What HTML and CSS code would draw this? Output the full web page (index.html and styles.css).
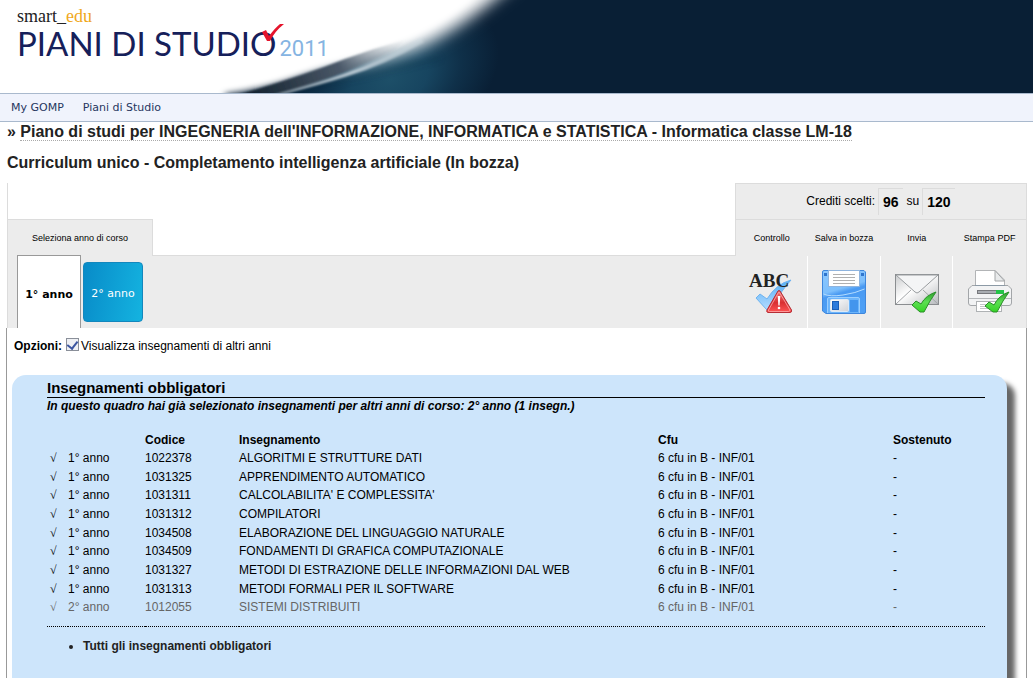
FILE: index.html
```
<!DOCTYPE html>
<html lang="it">
<head>
<meta charset="utf-8">
<title>Piani di Studio</title>
<link rel="stylesheet" href="styles.css">
</head>
<body>
<header class="banner">
  <svg class="swoosh" width="536" height="93" viewBox="0 0 536 93" aria-hidden="true">
    <defs>
      <filter id="wide" x="-10%" y="-30%" width="120%" height="160%"><feGaussianBlur stdDeviation="8"/></filter>
      <filter id="mid" x="-10%" y="-30%" width="120%" height="160%"><feGaussianBlur stdDeviation="3"/></filter>
      <filter id="fine" x="-10%" y="-30%" width="120%" height="160%"><feGaussianBlur stdDeviation="1"/></filter>
      <radialGradient id="teal" gradientUnits="userSpaceOnUse" cx="390" cy="80" r="115" gradientTransform="translate(390 80) rotate(-25) scale(1 .65) translate(-390 -80)">
        <stop offset="0" stop-color="#1d4f68"/><stop offset=".35" stop-color="#174560"/><stop offset=".65" stop-color="#0f3049"/><stop offset="1" stop-color="#091f35"/>
      </radialGradient>
      <linearGradient id="band" gradientUnits="userSpaceOnUse" x1="250" y1="93" x2="410" y2="40">
        <stop offset="0" stop-color="#14222f"/><stop offset=".55" stop-color="#4a5868"/><stop offset="1" stop-color="#b9c3cb" stop-opacity="0"/>
      </linearGradient>
      <linearGradient id="streak" gradientUnits="userSpaceOnUse" x1="270" y1="93" x2="430" y2="35">
        <stop offset="0" stop-color="#7e8e9a"/><stop offset=".5" stop-color="#b4c5d0"/><stop offset="1" stop-color="#dbe6ec" stop-opacity=".3"/>
      </linearGradient>
    </defs>
    <rect width="536" height="93" fill="#091f35"/>
    <rect width="536" height="93" fill="url(#teal)"/>
    <path d="M270 96Q330 84 360 76T440 58" fill="none" stroke="#0b2238" stroke-width="4" opacity=".3" filter="url(#mid)"/>
    <path d="M-60-60H570L503-8Q458 30 418 48Q370 66 330 66L200 80V60H-60Z" fill="#fff" filter="url(#wide)"/>
    <path d="M-40-40H490L470 0Q435 30 390 45Q325 66 296 77Q260 90 225 94V140H-40Z" fill="#fff" filter="url(#mid)"/>
    <path d="M238 95Q300 77 345 59Q375 48 405 40L395 50Q345 74 275 97Z" fill="url(#band)" filter="url(#fine)"/>
    <path d="M272 95Q310 85 345 73Q385 59 420 38L424 42Q385 65 345 77Q320 85 284 94Z" fill="url(#streak)" filter="url(#fine)"/>
  </svg>
  <div class="brand">
    <div class="brand-top">smart_<span class="brand-edu">edu</span></div>
    <div class="brand-main">
      <span class="brand-name">PIANI DI STUDIO</span><svg class="brand-tick" width="22" height="19" viewBox="0 0 22 19" aria-hidden="true"><path d="M0 8L4 6L7 12Q13 4 18 0H22Q13 7 8 17L5 17Z" fill="#e5142c"/></svg><span class="brand-year">2011</span>
    </div>
  </div>
</header>
<nav class="nav">
  <a href="#">My GOMP</a>
  <a href="#">Piani di Studio</a>
</nav>
<main class="page">
  <h1 class="title">» <a href="#">Piano di studi per INGEGNERIA dell'INFORMAZIONE, INFORMATICA e STATISTICA - Informatica classe LM-18</a></h1>
  <h2 class="subtitle">Curriculum unico - Completamento intelligenza artificiale (In bozza)</h2>

  <section class="toolbar">
    <div class="years">
      <div class="years-label">Seleziona anno di corso</div>
      <div class="years-tabs">
        <button class="tab tab-active" type="button">1° anno</button>
        <button class="tab tab-blue" type="button">2° anno</button>
      </div>
    </div>
    <div class="tools">
      <div class="credits">Crediti scelti: <b>96</b> su <b class="total">120</b></div>
      <div class="actions">
        <button class="action" type="button"><span class="action-label">Controllo</span>
          <span class="action-icon"><svg width="44" height="44" viewBox="0 0 44 44" aria-hidden="true">
            <defs>
              <linearGradient id="lb" x2="0" y2="1"><stop stop-color="#55aef5"/><stop offset="1" stop-color="#b5dcff"/></linearGradient>
              <linearGradient id="rd" x2="0" y2="1"><stop stop-color="#ef7777"/><stop offset=".55" stop-color="#d92f32"/><stop offset="1" stop-color="#f55"/></linearGradient>
            </defs>
            <path d="M7 28L11 24L18 29Q27 14 42 10Q32 21 21 40H18Z" fill="url(#lb)" stroke="#6fb3ef"/>
            <text class="abc" x="0" y="17">ABC</text>
            <path d="M29 21Q30 20 31 21L42.500 40Q43 42.500 41 42.500H19Q17 42 18 40Z" fill="url(#rd)" stroke="#b52c34"/>
            <path d="M29.500 22.500L19.500 40Q19 41.500 20.500 41.500H39.500Q41.500 41 41 40L30.500 22.500Z" fill="none" stroke="#ffabab" stroke-width=".8"/>
            <path d="M28.700 26H31.300L30.600 35.500H29.400Z" fill="#fff"/><circle cx="30" cy="38" r="1.300" fill="#fff"/>
          </svg></span></button>
        <button class="action" type="button"><span class="action-label">Salva in bozza</span>
          <span class="action-icon"><svg width="44" height="44" viewBox="0 0 44 44" aria-hidden="true">
            <defs><linearGradient id="fl" x2=".3" y2="1"><stop stop-color="#8cc8ff"/><stop offset=".5" stop-color="#7dbffc"/><stop offset=".6" stop-color="#4a9af2"/><stop offset="1" stop-color="#4d9ff5"/></linearGradient>
            <linearGradient id="mt" x2="1" y2="1"><stop stop-color="#fff"/><stop offset="1" stop-color="#cfd2d7"/></linearGradient></defs>
            <path d="M2 .5H42L43.500 2V42Q43.500 43.500 42 43.500H4L.5 41V2Q.5 .5 2 .5Z" fill="url(#fl)" stroke="#3f87dc"/>
            <path d="M1.500 24Q8 27 21 25T42.500 19" fill="none" stroke="#b3dcff"/>
            <rect x="6.500" y=".5" width="31" height="16" fill="#fff" stroke="#8fb4de"/>
            <path d="M11 4.500H33M11 7.500H33M11 10.500H33M11 13.500H33" stroke="#b0b0b0"/>
            <rect x="2" y="3" width="3" height="3" fill="#2f75cd"/><rect x="39" y="3" width="3" height="3" fill="#2f75cd"/>
            <path d="M5.500 43V29Q5.500 27.500 7 27.500H36Q37.500 27.500 37.500 29V43" fill="#6cb5fb" stroke="#9bcfff"/>
            <rect x="8.500" y="29.500" width="18" height="12" rx="1" fill="url(#mt)" stroke="#dce9f6"/>
            <rect x="10.500" y="31.500" width="6" height="8" fill="#2c7bdc" stroke="#195eb8"/>
            <path d="M28 30H36V42H28Z" fill="#4395ed"/>
          </svg></span></button>
        <button class="action" type="button"><span class="action-label">Invia</span>
          <span class="action-icon"><svg width="44" height="44" viewBox="0 0 44 44" aria-hidden="true">
            <defs><linearGradient id="gr" x2="0" y2="1"><stop stop-color="#2c9d2e"/><stop offset=".5" stop-color="#5cdf52"/><stop offset="1" stop-color="#35d325"/></linearGradient>
            <linearGradient id="ev" x2="1" y2="1"><stop stop-color="#c9cbcd"/><stop offset=".45" stop-color="#fff"/><stop offset="1" stop-color="#b6b9bc"/></linearGradient></defs>
            <rect x=".5" y="4.500" width="43" height="30" fill="url(#ev)" stroke="#8a8d90"/>
            <path d="M1 34L16 20M43 34L28 20" stroke="#a4a7aa"/>
            <path d="M1 5H43L24 22Q22 24 20 22Z" fill="#f4f5f6" stroke="#999da0"/>
            <path d="M17 35L21 31L26 34Q31 25 41 22Q35 30 29 42H25Z" fill="url(#gr)" stroke="#288e26"/>
          </svg></span></button>
        <button class="action" type="button"><span class="action-label">Stampa PDF</span>
          <span class="action-icon"><svg width="44" height="44" viewBox="0 0 44 44" aria-hidden="true">
            <path d="M7.500 18V.5H27L36.500 10V18Z" fill="#fff" stroke="#b2b4b6"/>
            <path d="M27 .5V11H36.500Z" fill="#e8eaeb" stroke="#a3a6a8"/>
            <path d="M4 15.500H40L43.500 19V33Q43.500 35.500 41 35.500H3Q.5 35.500 .5 33V19Z" fill="#f2f3f4" stroke="#a3a6a9"/>
            <path d="M7 15.500H37" stroke="#8c9aa6"/>
            <rect x="9.500" y="20.500" width="26" height="3" fill="#a9adb2" stroke="#77797d"/>
            <rect x="28" y="20" width="8" height="4" fill="#25c449"/>
            <path d="M1 28.500H43" stroke="#b5b8bb"/>
            <rect x="8.500" y="31.500" width="25" height="10" fill="#fff" stroke="#afb2b4"/>
            <path d="M12 34.500H29M12 36.500H29M12 38.500H24" stroke="#c3c5c7"/>
            <path d="M17 36L21 32L26 35Q31 25 41 22Q35 30 29 42H25Z" fill="url(#gr)" stroke="#288e26"/>
          </svg></span></button>
      </div>
    </div>
  </section>

  <section class="content">
    <div class="options"><b>Opzioni:</b>
      <input id="altri" class="check" type="checkbox" checked><label for="altri">Visualizza insegnamenti di altri anni</label>
    </div>
    <div class="panel">
      <h3 class="panel-title">Insegnamenti obbligatori</h3>
      <p class="panel-note">In questo quadro hai già selezionato insegnamenti per altri anni di corso: 2° anno (1 insegn.)</p>
      <table class="courses">
        <thead><tr><th class="c-mark"></th><th class="c-year"></th><th class="c-code">Codice</th><th class="c-name">Insegnamento</th><th class="c-cfu">Cfu</th><th>Sostenuto</th></tr></thead>
        <tbody>
          <tr><td class="mark">√</td><td>1° anno</td><td>1022378</td><td>ALGORITMI E STRUTTURE DATI</td><td>6 cfu in B - INF/01</td><td>-</td></tr>
          <tr><td class="mark">√</td><td>1° anno</td><td>1031325</td><td>APPRENDIMENTO AUTOMATICO</td><td>6 cfu in B - INF/01</td><td>-</td></tr>
          <tr><td class="mark">√</td><td>1° anno</td><td>1031311</td><td>CALCOLABILITA' E COMPLESSITA'</td><td>6 cfu in B - INF/01</td><td>-</td></tr>
          <tr><td class="mark">√</td><td>1° anno</td><td>1031312</td><td>COMPILATORI</td><td>6 cfu in B - INF/01</td><td>-</td></tr>
          <tr><td class="mark">√</td><td>1° anno</td><td>1034508</td><td>ELABORAZIONE DEL LINGUAGGIO NATURALE</td><td>6 cfu in B - INF/01</td><td>-</td></tr>
          <tr><td class="mark">√</td><td>1° anno</td><td>1034509</td><td>FONDAMENTI DI GRAFICA COMPUTAZIONALE</td><td>6 cfu in B - INF/01</td><td>-</td></tr>
          <tr><td class="mark">√</td><td>1° anno</td><td>1031327</td><td>METODI DI ESTRAZIONE DELLE INFORMAZIONI DAL WEB</td><td>6 cfu in B - INF/01</td><td>-</td></tr>
          <tr><td class="mark">√</td><td>1° anno</td><td>1031313</td><td>METODI FORMALI PER IL SOFTWARE</td><td>6 cfu in B - INF/01</td><td>-</td></tr>
          <tr class="other-year"><td class="mark">√</td><td>2° anno</td><td>1012055</td><td>SISTEMI DISTRIBUITI</td><td>6 cfu in B - INF/01</td><td>-</td></tr>
        </tbody>
      </table>
      <ul class="rules"><li>Tutti gli insegnamenti obbligatori</li></ul>
    </div>
  </section>
</main>
</body>
</html>
```
FILE: styles.css
```
* { box-sizing: border-box; }
body {
  margin: 0;
  background: #fff;
  color: #000;
  font: 12px/15px "Liberation Sans", Arial, sans-serif;
}
button { font: inherit; color: inherit; border: 0; background: none; padding: 0; cursor: pointer; }

.banner { position: relative; height: 93px; background: #091f35; overflow: hidden; }
.swoosh { position: absolute; left: 0; top: 0; }
.brand { position: relative; padding: 6px 0 0 17px; }
.brand-top { font: 18px/20px "Liberation Serif", "Times New Roman", serif; color: #222; }
.brand-edu { color: #f0a81c; }
.brand-main { display: flex; align-items: baseline; line-height: 34px; color: #16205a; }
.brand-name { font-family: Lato, sans-serif; font-size: 33px; }
.brand-tick { position: absolute; left: 262px; top: 24px; }
.brand-year { font-family: Roboto, sans-serif; font-size: 22px; color: #85b4e2; padding-left: 3px; }

.nav {
  display: flex;
  gap: 19px;
  padding: 0 11px;
  background: #f0f3fc;
  border-top: 1px solid #a9b9cd;
  border-bottom: 1px solid #a9b9cd;
  font: 11px/27px "DejaVu Sans", Verdana, sans-serif;
}
.nav a { color: #27365f; text-decoration: none; }

.page { padding: 0 6px; }
.title { margin: 1px 0 0; padding-left: 1px; font-size: 16px; line-height: 18px; color: #222; }
.title a { color: inherit; text-decoration: none; border-bottom: 1px dotted #aaa; }
.subtitle { margin: 13px 0 11px; padding-left: 1px; font-size: 16px; line-height: 18px; color: #222; }

.toolbar { display: flex; margin-left: 1px; height: 145px; }
.years { flex: 1; display: flex; flex-direction: column; align-items: flex-start; border-left: 1px solid #dcdcdc; padding-top: 36px; }
.years-label {
  width: 145px;
  height: 37px;
  margin-bottom: -1px;
  position: relative;
  background: #ececec;
  border: 1px solid #dcdcdc;
  border-width: 1px 1px 0 0;
  font-size: 9px;
  line-height: 36px;
  text-align: center;
}
.years-tabs { align-self: stretch; flex: 1; display: flex; gap: 2px; padding-left: 9px; background: #ececec; border-top: 1px solid #dcdcdc; }
.tab { font: 11px "DejaVu Sans", Verdana, sans-serif; }
.tab-active { position: relative; width: 64px; margin-top: -1px; padding-top: 4px; background: #fff; border: 1px solid #999; border-bottom: 0; font-weight: bold; }
.tab-blue { width: 60px; height: 60px; margin-top: 6px; padding-top: 2px; border: 1px solid #1387bd; border-radius: 4px; background: linear-gradient(100deg, #088bc8, #14b3e0); color: #fff; }

.tools { width: 292px; background: #ececec; border: 1px solid #dcdcdc; border-bottom: 0; border-left: 0; }
.credits { display: flex; justify-content: center; align-items: center; gap: 3px; height: 36px; border-bottom: 1px solid #dcdcdc; border-left: 1px solid #dcdcdc; }
.credits b { height: 27px; margin-right: 1px; padding: 0 4px; border-left: 1px solid #dcdcdc; border-top: 1px solid #dcdcdc; font-size: 14px; line-height: 26px; }
.credits .total { padding-right: 4px; }
.actions { display: grid; grid-template-columns: repeat(4, 1fr); }
.action { display: block; text-align: center; }
.action-label { display: block; height: 36px; font-size: 9px; line-height: 36px; white-space: nowrap; }
.action:first-child .action-label { border-left: 1px solid #dcdcdc; }
.action-icon { display: flex; justify-content: center; padding: 14px 0 0 1px; height: 72px; border-right: 1px solid #fff; }
.action:last-child .action-icon { border-right: 0; }
.action svg { overflow: visible; }
.abc { font: bold 19px "Liberation Serif", serif; fill: #222; }

.content { border: 1px solid #999; border-width: 0 1px; padding: 10px 19px 0 5px; }
.options { display: flex; align-items: center; padding-left: 2px; height: 16px; }
.check { appearance: none; width: 13px; height: 13px; margin: 0 2px 4px 4px; border: 1px solid #8a8f99; background: #eef0f4; display: grid; place-items: center; }
.check:checked::before { content: ""; width: 5px; height: 8px; border: solid #3b55a0; border-width: 0 2px 2px 0; transform: rotate(38deg); }

.panel { margin-top: 21px; padding: 6px 22px 40px 35px; min-height: 330px; background: #cde5fb; border-radius: 14px 14px 0 0; box-shadow: 9px 7px 5px -1px #666; }
.panel-title { margin: 0; padding-bottom: 2px; font-size: 15px; line-height: 14px; border-bottom: 1px solid #000; }
.panel-note { margin: 0; font-weight: bold; font-style: italic; line-height: 16px; }
.courses { width: 100%; margin-top: 19px; border-collapse: collapse; table-layout: fixed; border-bottom: 1px dotted #000; }
.courses th, .courses td { padding: 0; text-align: left; vertical-align: top; height: 19px; line-height: 15px; white-space: nowrap; }
.courses th { height: 18px; }
.courses tr:nth-child(3n+2) td { height: 18px; }
.courses tbody tr:last-child td { height: 26px; }
.courses .mark { padding-left: 3px; font-family: "Liberation Serif", serif; }
.c-mark { width: 21px; }
.c-year { width: 77px; }
.c-code { width: 94px; }
.c-name { width: 419px; }
.c-cfu { width: 235px; }
.other-year { color: #666; }
.rules { margin: 0; padding: 12px 0 0 36px; font-weight: bold; color: #222; }
```
